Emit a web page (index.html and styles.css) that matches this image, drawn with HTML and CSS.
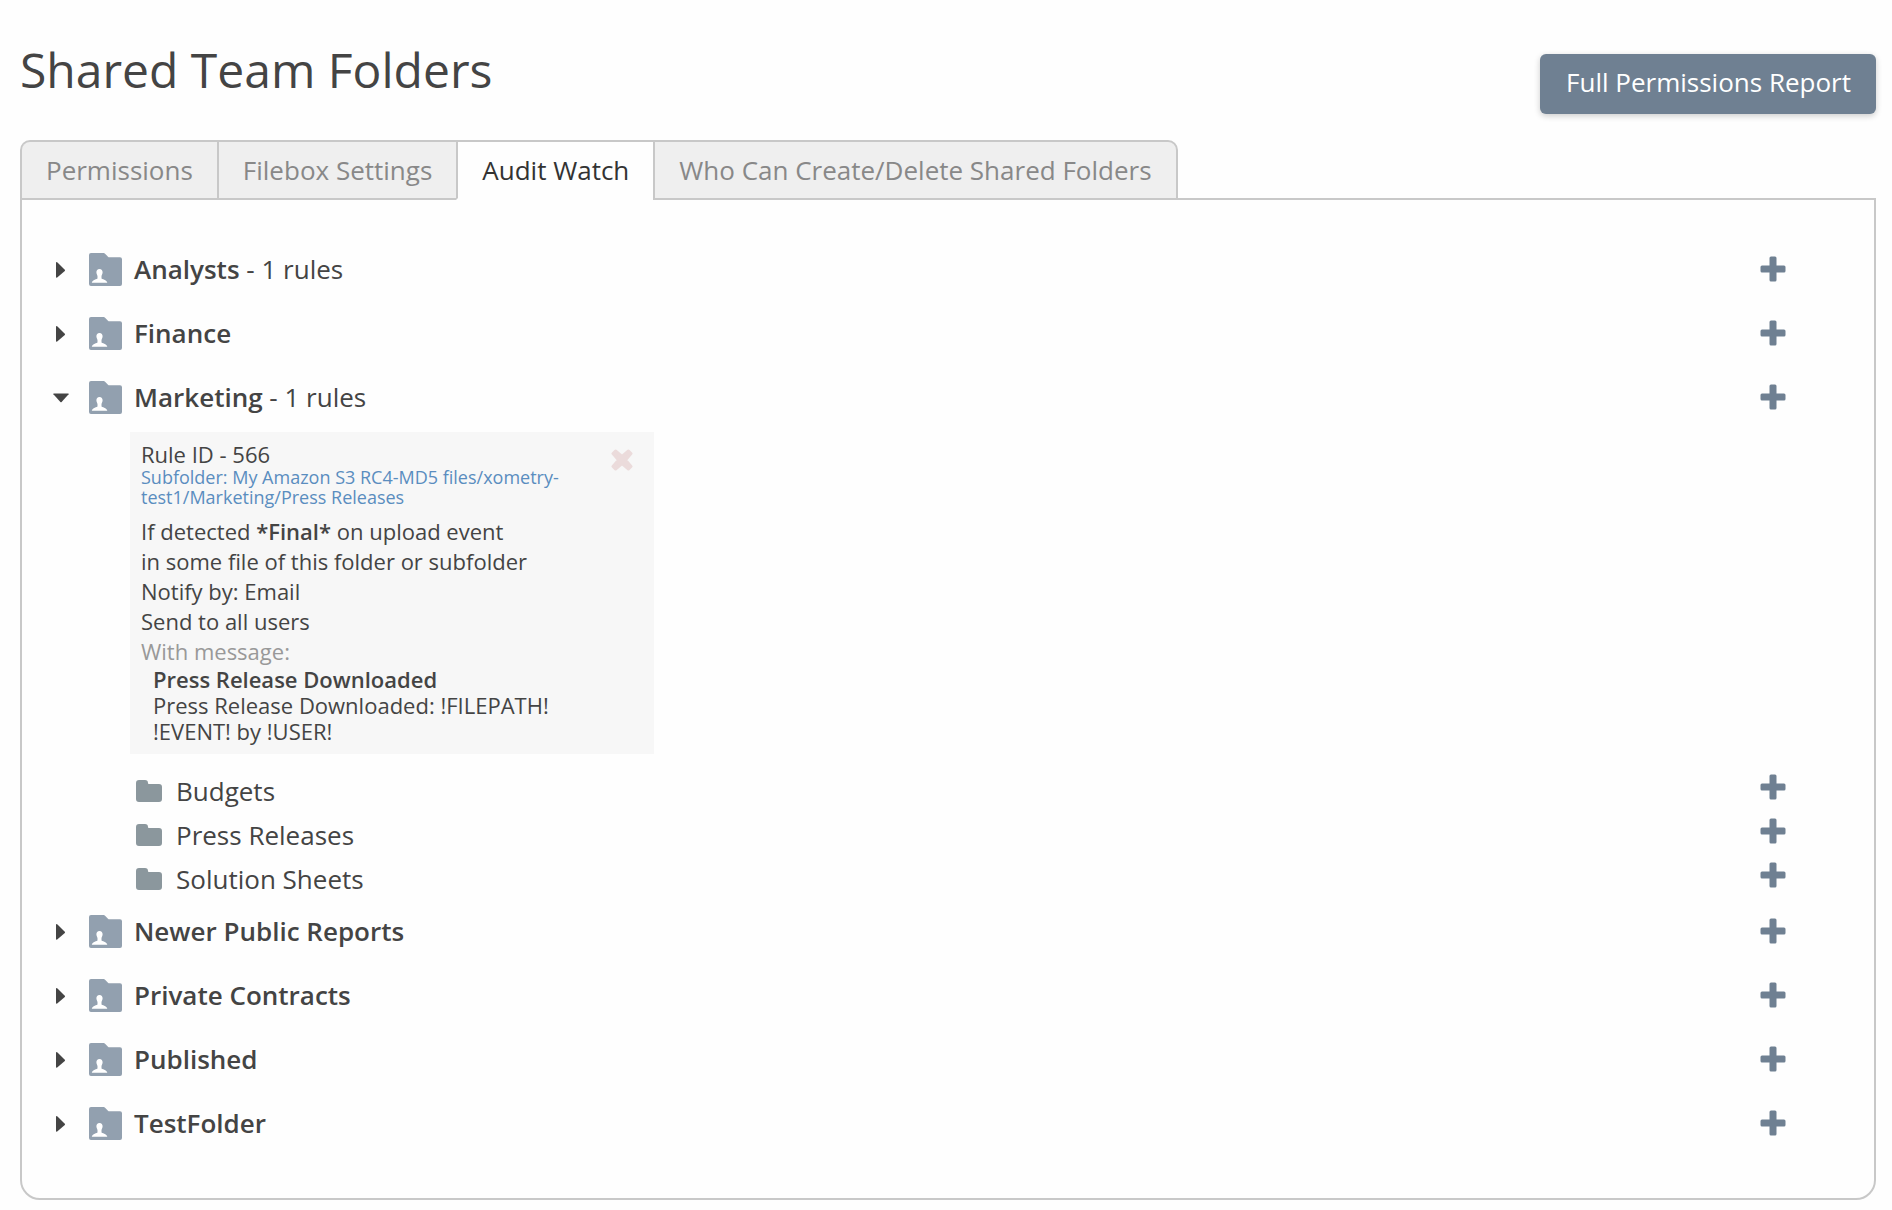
FILE: index.html
```html
<!DOCTYPE html>
<html lang="en">
<head>
<meta charset="utf-8">
<meta name="viewport" content="width=device-width, initial-scale=1">
<title>Shared Team Folders</title>
<link rel="stylesheet" href="styles.css">
</head>
<body>
<svg class="sprite" aria-hidden="true">
  <symbol id="caret-right" viewBox="0 0 16 16"><path d="M3 1.500Q3 0 4.200 .8L11.800 8.200Q12.300 8.800 11.800 9.400L4.200 16Q3 16.500 3 15.500Z"/></symbol>
  <symbol id="caret-down" viewBox="0 0 16 16"><path d="M.8 4H15.200Q16 4 15.600 4.800L8.600 12.400Q8 13 7.400 12.400L.4 4.800Q0 4 .8 4Z"/></symbol>
  <symbol id="team-folder" viewBox="0 0 33 33">
    <path class="folder-shape" d="M2 0H14.500Q15.500 0 16.300 .9L19 3.800Q19.500 4.300 20.300 4.300H31Q33 4.300 33 6.300V31Q33 33 31 33H2Q0 33 0 31V2Q0 0 2 0Z"/>
    <path class="person-shape" d="M10.500 16C12.600 16 13.600 17.300 13.600 19.300C13.600 21 12.500 22.200 12.500 23.300V25.200C12.500 26.300 18 26.700 18.300 29.700H2.800C3.100 26.700 8.500 26.300 8.500 25.200V23.300C8.500 22.200 7.400 21 7.400 19.300C7.400 17.300 8.400 16 10.500 16Z"/>
  </symbol>
  <symbol id="folder" viewBox="0 0 26 22"><path d="M3 0H9Q12 0 12 3V3.200Q12 4 12.800 4H23Q26 4 26 7V19Q26 22 23 22H3Q0 22 0 19V3Q0 0 3 0Z"/></symbol>
  <symbol id="plus" viewBox="0 0 26 26"><path d="M11 .5H15Q16.500 .5 16.500 2V9.500H24Q25.500 9.500 25.500 11V15Q25.500 16.500 24 16.500H16.500V24Q16.500 25.500 15 25.500H11Q9.500 25.500 9.500 24V16.500H2Q.5 16.500 .5 15V11Q.5 9.500 2 9.500H9.500V2Q9.500 .5 11 .5Z"/></symbol>
  <symbol id="cross" viewBox="0 0 22 22"><path d="M4.500 2 11 7.500 17.500 2 20 4.500 14.500 11 20 17.500 17.500 20 11 14.500 4.500 20 2 17.500 7.500 11 2 4.500Z"/></symbol>
</svg>

<header class="page-header">
  <h1 class="page-title">Shared Team Folders</h1>
  <button class="report-button" type="button">Full Permissions Report</button>
</header>

<main class="content">
  <nav class="tabs">
    <a class="tab" href="#permissions">Permissions</a>
    <a class="tab" href="#filebox">Filebox Settings</a>
    <a class="tab tab-active" href="#audit" aria-current="page">Audit Watch</a>
    <a class="tab" href="#who">Who Can Create/Delete Shared Folders</a>
  </nav>

  <section class="panel">
    <ul class="tree">
      <li>
        <div class="row">
          <button class="toggle" type="button" aria-expanded="false"><svg class="caret"><use href="#caret-right"/></svg><svg class="team-icon"><use href="#team-folder"/></svg><span><strong>Analysts</strong> - 1 rules</span></button>
          <button class="add" type="button" aria-label="Add rule to Analysts"><svg class="plus"><use href="#plus"/></svg></button>
        </div>
      </li>
      <li>
        <div class="row">
          <button class="toggle" type="button" aria-expanded="false"><svg class="caret"><use href="#caret-right"/></svg><svg class="team-icon"><use href="#team-folder"/></svg><strong>Finance</strong></button>
          <button class="add" type="button" aria-label="Add rule to Finance"><svg class="plus"><use href="#plus"/></svg></button>
        </div>
      </li>
      <li>
        <div class="row">
          <button class="toggle" type="button" aria-expanded="true"><svg class="caret"><use href="#caret-down"/></svg><svg class="team-icon"><use href="#team-folder"/></svg><span><strong>Marketing</strong> - 1 rules</span></button>
          <button class="add" type="button" aria-label="Add rule to Marketing"><svg class="plus"><use href="#plus"/></svg></button>
        </div>
        <article class="rule">
          <div class="rule-body">
            <h2 class="rule-title">Rule ID - 566</h2>
            <a class="rule-path" href="#subfolder">Subfolder: My Amazon S3 RC4-MD5 files/xometry-test1/Marketing/Press Releases</a>
            <p class="rule-line">If detected <strong>*Final*</strong> on upload event</p>
            <p class="rule-line">in some file of this folder or subfolder</p>
            <p class="rule-line">Notify by: Email</p>
            <p class="rule-line">Send to all users</p>
            <p class="rule-line rule-muted">With message:</p>
            <div class="message">
              <strong class="message-subject">Press Release Downloaded</strong>
              <p class="message-text">Press Release Downloaded: !FILEPATH! !EVENT! by !USER!</p>
            </div>
          </div>
          <button class="remove" type="button" aria-label="Delete rule"><svg class="cross"><use href="#cross"/></svg></button>
        </article>
        <ul class="subfolders">
          <li class="subrow">
            <span class="subname"><svg class="folder"><use href="#folder"/></svg>Budgets</span>
            <button class="add" type="button" aria-label="Add rule to Budgets"><svg class="plus"><use href="#plus"/></svg></button>
          </li>
          <li class="subrow">
            <span class="subname"><svg class="folder"><use href="#folder"/></svg>Press Releases</span>
            <button class="add" type="button" aria-label="Add rule to Press Releases"><svg class="plus"><use href="#plus"/></svg></button>
          </li>
          <li class="subrow">
            <span class="subname"><svg class="folder"><use href="#folder"/></svg>Solution Sheets</span>
            <button class="add" type="button" aria-label="Add rule to Solution Sheets"><svg class="plus"><use href="#plus"/></svg></button>
          </li>
        </ul>
      </li>
      <li>
        <div class="row">
          <button class="toggle" type="button" aria-expanded="false"><svg class="caret"><use href="#caret-right"/></svg><svg class="team-icon"><use href="#team-folder"/></svg><strong>Newer Public Reports</strong></button>
          <button class="add" type="button" aria-label="Add rule to Newer Public Reports"><svg class="plus"><use href="#plus"/></svg></button>
        </div>
      </li>
      <li>
        <div class="row">
          <button class="toggle" type="button" aria-expanded="false"><svg class="caret"><use href="#caret-right"/></svg><svg class="team-icon"><use href="#team-folder"/></svg><strong>Private Contracts</strong></button>
          <button class="add" type="button" aria-label="Add rule to Private Contracts"><svg class="plus"><use href="#plus"/></svg></button>
        </div>
      </li>
      <li>
        <div class="row">
          <button class="toggle" type="button" aria-expanded="false"><svg class="caret"><use href="#caret-right"/></svg><svg class="team-icon"><use href="#team-folder"/></svg><strong>Published</strong></button>
          <button class="add" type="button" aria-label="Add rule to Published"><svg class="plus"><use href="#plus"/></svg></button>
        </div>
      </li>
      <li>
        <div class="row">
          <button class="toggle" type="button" aria-expanded="false"><svg class="caret"><use href="#caret-right"/></svg><svg class="team-icon"><use href="#team-folder"/></svg><strong>TestFolder</strong></button>
          <button class="add" type="button" aria-label="Add rule to TestFolder"><svg class="plus"><use href="#plus"/></svg></button>
        </div>
      </li>
    </ul>
  </section>
</main>
</body>
</html>
```
FILE: styles.css
```css
* {
  box-sizing: border-box;
}

body {
  margin: 0;
  padding: 36px 16px 10px 20px;
  background: #fefefe;
  color: #444;
  font: 26px/36px "Open Sans", "Noto Sans", sans-serif;
}

h1, h2, p, ul {
  margin: 0;
  padding: 0;
}

ul {
  list-style: none;
}

button {
  border: 0;
  padding: 0;
  background: none;
  color: inherit;
  font: inherit;
  cursor: pointer;
}

svg {
  display: block;
  flex: none;
  fill: currentColor;
}

strong {
  font-weight: 600;
}

.sprite {
  position: absolute;
  width: 0;
  height: 0;
}

.page-header {
  display: flex;
  justify-content: space-between;
  align-items: flex-start;
}

.page-title {
  font-size: 48px;
  font-weight: 400;
  line-height: 68px;
}

.report-button {
  margin-top: 18px;
  padding: 10px 25px 14px 26px;
  border-radius: 6px;
  background: #6f8092;
  box-shadow: 0 2px 6px rgba(0, 0, 0, 0.2);
  color: #fff;
}

.content {
  margin-top: 26px;
}

.tabs {
  position: relative;
  display: flex;
  margin-bottom: -2px;
}

.tab {
  padding: 10px 24px;
  border: 2px solid #c8c8c8;
  border-right-width: 0;
  background: #efefef;
  color: #888;
  text-decoration: none;
}

.tab:first-child {
  border-top-left-radius: 10px;
}

.tab:last-child {
  border-right-width: 2px;
  border-top-right-radius: 10px;
}

.tab-active {
  border-bottom-color: #fefefe;
  background: #fefefe;
  color: #333;
}

.panel {
  padding: 37px 80px 43px 31px;
  border: 2px solid #c8c8c8;
  border-radius: 0 0 20px 20px;
}

.row {
  display: flex;
  justify-content: space-between;
  align-items: center;
  height: 64px;
}

.toggle {
  display: flex;
  align-items: center;
  text-align: left;
}

.caret {
  width: 16px;
  height: 17px;
  margin-right: 20px;
  overflow: visible;
}

.team-icon {
  width: 33px;
  height: 33px;
  margin-right: 12px;
}

.folder-shape {
  fill: #92a0af;
}

.person-shape {
  fill: #fff;
}

.add {
  padding: 8px;
  color: #6f8092;
}

.plus {
  width: 26px;
  height: 26px;
}

.rule {
  display: flex;
  align-items: flex-start;
  width: 524px;
  margin: 3px 0 11px 77px;
  padding: 9px 21px 10px 11px;
  background: #f7f7f7;
  font-size: 22px;
}

.rule-body {
  flex: 1;
  padding-right: 20px;
}

.rule-title {
  font-size: 22px;
  font-weight: 400;
  line-height: 26px;
}

.rule-path {
  display: block;
  margin-bottom: 9px;
  color: #5a8dbf;
  font-size: 18px;
  line-height: 20px;
  text-decoration: none;
}

.rule-line {
  line-height: 30px;
}

.rule-muted {
  color: #999;
}

.message {
  padding-left: 12px;
  line-height: 26px;
}

.message-subject {
  display: block;
}

.remove {
  margin-top: 8px;
  color: #ebdbdb;
}

.cross {
  width: 22px;
  height: 22px;
  stroke: currentColor;
  stroke-width: 3px;
  stroke-linejoin: round;
}

.subfolders {
  margin-bottom: 2px;
  padding-left: 83px;
}

.subrow {
  display: flex;
  justify-content: space-between;
  align-items: center;
  height: 44px;
}

.subname {
  display: flex;
  align-items: center;
  gap: 14px;
  padding-top: 8px;
}

.folder {
  width: 26px;
  height: 22px;
  color: #8b979d;
}
```
